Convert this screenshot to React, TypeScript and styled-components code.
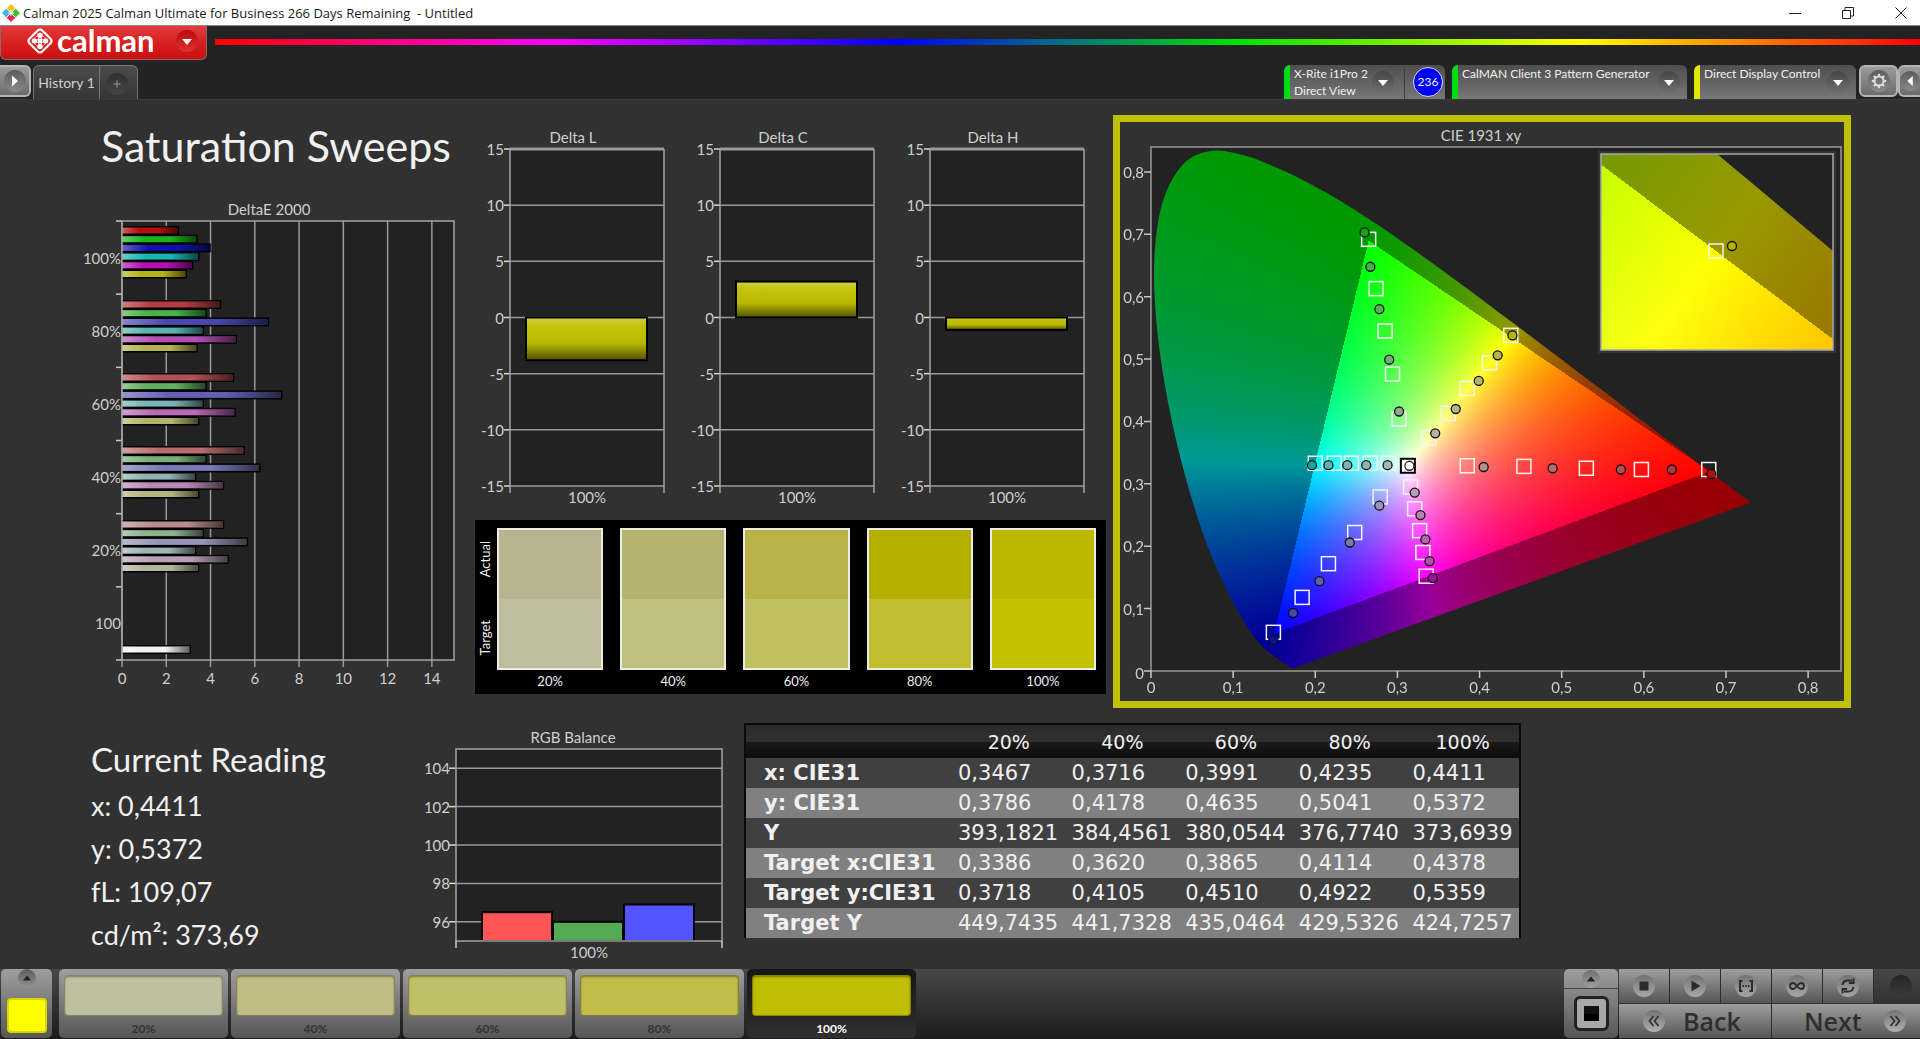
import React, { useLayoutEffect, useRef } from "react";
import styled, { createGlobalStyle, css } from "styled-components";

const humanist = `Lato, "Open Sans", "Liberation Sans", sans-serif`;
const system = `"Open Sans", "Noto Sans", "Liberation Sans", sans-serif`;
const wide = `"DejaVu Sans", "Noto Sans", sans-serif`;

const GlobalStyle = createGlobalStyle`
  *, *::before, *::after { box-sizing: border-box; }
  body { margin: 0; background: #313131; font-family: ${humanist}; color: #f0f0f0; }
  button { font: inherit; color: inherit; border: 0; padding: 0; margin: 0; background: none; cursor: pointer; }
  h1, h2, p { margin: 0; font-weight: 400; }
  svg { display: block; }
`;

/* ---------- window frame ---------- */

const Shell = styled.div`
  min-height: 100vh;
  display: flex;
  flex-direction: column;
  background: #313131;
`;

const TitleBar = styled.header`
  display: flex;
  align-items: center;
  height: 26px;
  padding-left: 2px;
  background: #fff;
  border-bottom: 1px solid #8a8a8a;
  color: #1a1a1a;
  font: 13px/24px ${system};
`;

const WindowTitle = styled.span`
  flex: 1;
  padding-left: 3px;
  white-space: pre;
`;

const WindowButtons = styled.div`
  display: flex;
  gap: 15px;
`;

const WindowButton = styled.button`
  width: 38px;
  height: 25px;
  display: grid;
  place-items: center;
`;

const Header = styled.div`
  background: #232323;
`;

const BrandRow = styled.div`
  display: flex;
  align-items: flex-start;
  gap: 8px;
  height: 39px;
`;

const Brand = styled.button`
  width: 207px;
  height: 34px;
  display: flex;
  align-items: center;
  gap: 3px;
  padding: 0 8px 3px 25px;
  border: 1px solid #8c6a6a;
  border-top: 0;
  border-radius: 0 0 6px 6px;
  background: linear-gradient(#e23c3c, #d82020 50%, #c81010);
  color: #fff;
`;

const BrandName = styled.span`
  flex: 1;
  padding-bottom: 3px;
  text-align: left;
  font: 700 31px/28px ${humanist};
`;

const Rainbow = styled.div`
  flex: 1;
  height: 6px;
  margin-top: 13px;
  background: linear-gradient(90deg, #ff0000, #ff00ff 20%, #0000ff 40%, #00e600 60%, #ffff00 80%, #ff0000);
`;

const TabRow = styled.div`
  display: flex;
  align-items: flex-start;
  height: 34px;
`;

const raised = css`
  background: linear-gradient(#9a9a9a, #6c6c6c);
  border: 2px solid #b4b4b4;
  border-radius: 6px;
`;

const EdgeButton = styled.button<{ $side: "left" | "right" }>`
  ${raised}
  width: ${(p) => (p.$side === "left" ? 31 : 22)}px;
  height: 32px;
  display: flex;
  align-items: center;
  justify-content: center;
  overflow: hidden;
  ${(p) =>
    p.$side === "left"
      ? "border-left: 0; border-top-left-radius: 0; border-bottom-left-radius: 0;"
      : "border-right: 0; border-top-right-radius: 0; border-bottom-right-radius: 0;"}
`;

const GearButton = styled.button`
  ${raised}
  width: 39px;
  height: 32px;
  display: grid;
  place-items: center;
`;

const Tabs = styled.div`
  display: flex;
  height: 34px;
  margin-left: 2px;
  border: 1px solid #777;
  border-bottom: 0;
  border-radius: 6px 6px 0 0;
  background: linear-gradient(#4c4c4c, #343434);
`;

const Tab = styled.button`
  width: 66px;
  border-right: 1px solid #777;
  color: #d0d0d0;
  font-size: 14px;
`;

const AddTab = styled.button`
  width: 37px;
  display: grid;
  place-items: center;
  padding: 3px 4px 0 0;
`;

const Spacer = styled.div`
  flex: 1;
`;

const Devices = styled.div`
  display: flex;
  gap: 7px;
  margin-right: 3px;
`;

const Device = styled.div<{ $status: string; $width: number; $inset: number }>`
  display: flex;
  align-items: center;
  width: ${(p) => p.$width}px;
  height: 34px;
  padding-right: ${(p) => p.$inset}px;
  border-left: 6px solid ${(p) => p.$status};
  border-radius: 6px 6px 0 0;
  background: linear-gradient(#4e4e4e, #777);
`;

const DeviceText = styled.div`
  flex: 1;
  align-self: stretch;
  padding-left: 4px;
  color: #f0f0f0;
  font-size: 12px;
  line-height: 17px;
  white-space: nowrap;
`;

const Divider = styled.span`
  width: 1px;
  align-self: stretch;
  margin: 3px 8px 0 10px;
  background: #3c3c3c;
`;

const Counter = styled.span`
  width: 30px;
  height: 30px;
  border: 1px solid #d8d8ff;
  border-radius: 50%;
  background: #0000f4;
  font-size: 12px;
  line-height: 28px;
  text-align: center;
`;

const CaretButton = styled.button`
  width: 22px;
  height: 22px;
`;

/* ---------- workspace ---------- */

const Workspace = styled.main`
  flex: 1;
  border-top: 1px solid #3a3a3a;
`;

const UpperRow = styled.section`
  display: grid;
  grid-template-columns: 475fr 631fr 814fr;
`;

const LowerRow = styled.section`
  display: grid;
  grid-template-columns: 424fr 298fr 1198fr;
  align-items: start;
`;

const SweepColumn = styled.div`
  min-width: 0;
  padding: 0 21px 0 82px;
`;

const PageTitle = styled.h1`
  padding: 16px 0 24px 19px;
  font-size: 43px;
  line-height: 60px;
  white-space: nowrap;
`;

const MiddleColumn = styled.div`
  min-width: 0;
  padding-top: 25px;
`;

const DeltaRow = styled.div`
  display: grid;
  grid-template-columns: repeat(3, minmax(0, 1fr));
  gap: 26px;
  padding: 0 20px 5px 7px;
`;

const Chart = styled.svg`
  width: 100%;
  height: auto;
  overflow: visible;
  font-family: ${humanist};
  font-size: 15px;
  fill: #cfcfcf;
`;

const Swatches = styled.div`
  display: flex;
  gap: 5px;
  height: 174px;
  padding: 8px 10px 0 3px;
  background: #000;
`;

const SideLabels = styled.div`
  width: 14px;
  display: grid;
  grid-template-rows: 62px 96px;
  justify-items: center;
  align-items: center;
  font-size: 13px;
  line-height: 14px;
`;

const SideLabel = styled.span`
  writing-mode: vertical-rl;
  rotate: 180deg;
`;

const SwatchGrid = styled.div`
  flex: 1;
  display: grid;
  grid-template-columns: repeat(5, minmax(0, 1fr));
  gap: 17px;
`;

const Swatch = styled.div`
  font-size: 13px;
  line-height: 22px;
  text-align: center;
`;

const SwatchBox = styled.div<{ $actual: string; $target: string }>`
  height: 142px;
  border: 2px solid #ecece0;
  background: linear-gradient(${(p) => p.$actual} 50%, ${(p) => p.$target} 50%);
`;

const CieColumn = styled.div`
  min-width: 0;
  padding: 15px 69px 0 7px;
`;

const CiePanel = styled.div`
  border: 7px solid #bfbf08;
`;

const FieldCanvas = styled.canvas`
  display: block;
  width: 100%;
  height: 100%;
`;

const Readings = styled.div`
  padding: 26px 0 0 91px;
  font-size: 27px;
  line-height: 43px;
  white-space: nowrap;
`;

const ReadingTitle = styled.h2`
  font-size: 33px;
  line-height: 50px;
`;

const RgbCell = styled.div`
  min-width: 0;
  padding-top: 17px;
`;

const TableCell = styled.div`
  padding: 15px 399px 0 22px;
`;

const Table = styled.table`
  width: 100%;
  table-layout: fixed;
  border-collapse: collapse;
  border: 2px solid #0a0a0a;
  border-bottom: 0;
  font: 21px/30px ${wide};
  white-space: nowrap;
`;

const HeadRow = styled.tr`
  height: 34px;
  background: linear-gradient(#2a2a2a, #303030 52%, #1a1a1a 52%, #0c0c0c);
`;

const HeadCell = styled.th`
  padding: 0;
  font-size: 19px;
  font-weight: 400;
  text-align: center;
  &:first-child { width: 207px; }
`;

const BodyRow = styled.tr`
  height: 30px;
  background: #404040;
  &:nth-child(even) { background: #808080; }
`;

const RowHead = styled.th`
  padding: 0 0 0 18px;
  text-align: left;
`;

const Cell = styled.td`
  padding: 0 0 0 6px;
`;

/* ---------- bottom bar ---------- */

const BottomBar = styled.footer`
  display: flex;
  height: 70px;
  padding-bottom: 1px;
  background: linear-gradient(#484848, #1c1c1c);
`;

const metal = css`
  background: linear-gradient(#9e9e9e, #565656);
`;

const PatternButton = styled.button`
  ${metal}
  width: 51px;
  margin: 0 7px 0 1px;
  display: flex;
  flex-direction: column;
  align-items: center;
  border-radius: 5px;
`;

const PatternColor = styled.span`
  width: 40px;
  height: 35px;
  margin-top: 11px;
  border: 2px solid #d8d800;
  border-radius: 4px;
  background: #ffff00;
`;

const Tiles = styled.div`
  display: flex;
  gap: 3px;
`;

const Tile = styled.button<{ $selected: boolean }>`
  width: 169px;
  padding: 6px 5px 0;
  border-radius: 5px;
  font-size: 12px;
  font-weight: 700;
  line-height: 26px;
  ${(p) =>
    p.$selected
      ? "background: linear-gradient(#161616, #303030); color: #fff;"
      : "background: linear-gradient(#9e9e9e, #565656); color: #333;"}
`;

const TileColor = styled.span<{ $color: string }>`
  display: block;
  height: 41px;
  border: 1px solid rgba(0, 0, 0, 0.3);
  border-radius: 4px;
  background: ${(p) => p.$color};
  box-shadow: inset 0 1px 2px rgba(0, 0, 0, 0.35);
`;

const Target = styled.div`
  ${metal}
  width: 54px;
  display: grid;
  grid-template-rows: 20px 1fr;
  border-radius: 5px;
`;

const TargetToggle = styled.button`
  display: grid;
  place-items: center;
  border-bottom: 1px solid #444;
`;

const TargetButton = styled.button`
  width: 35px;
  height: 35px;
  place-self: center;
  display: grid;
  place-items: center;
  border: 3px solid #222;
  border-radius: 6px;
  background: #a8a8a8;
`;

const TargetMark = styled.span`
  width: 15px;
  height: 15px;
  background: linear-gradient(#111 50%, #000 50%);
`;

const Transport = styled.div`
  width: 301px;
  display: grid;
  grid-template-rows: 34px 34px;
  row-gap: 1px;
  margin-left: 1px;
`;

const TransportRow = styled.div`
  display: flex;
`;

const ToolButton = styled.button`
  ${metal}
  width: 51px;
  display: grid;
  place-items: center;
  border-right: 1px solid #2c2c2c;
`;

const IdleLamp = styled.span`
  flex: 1;
  display: grid;
  place-items: center;
  padding-left: 8px;
`;

const NavButton = styled.button<{ $kind: "back" | "next" }>`
  ${metal}
  display: flex;
  align-items: center;
  color: #2e2e2e;
  font: 600 25px/30px ${system};
  ${(p) =>
    p.$kind === "back"
      ? "width: 153px; padding: 0 0 1px 24px; gap: 18px; border-right: 1px solid #2c2c2c;"
      : "flex: 1; padding: 0 0 1px 32px; gap: 22px;"}
`;

/* ---------- icons ---------- */

function AppIcon() {
  return (
    <svg width="18" height="18" viewBox="0 0 18 18" aria-hidden="true">
      <path d="M9 0l4.500 4.500L9 9 4.500 4.500z" fill="#f6c21c" />
      <path d="M4.500 4.500L9 9l-4.500 4.500L0 9z" fill="#3fb4e6" />
      <path d="M13.500 4.500L18 9l-4.500 4.500L9 9z" fill="#35c235" />
      <path d="M9 9l4.500 4.500L9 18l-4.500-4.500z" fill="#e6284e" />
      <path d="M4.500 4.500l9 9M13.500 4.500l-9 9" stroke="#fff" strokeWidth="1" />
      <path d="M9 5.500L12.500 9 9 12.500 5.500 9z" fill="#fff" fillOpacity=".55" />
    </svg>
  );
}

function BrandIcon() {
  const dots = [
    [13.5, 8.2], [8.2, 13.5], [18.8, 13.5], [13.5, 18.8],
  ];
  return (
    <svg width="28" height="28" viewBox="0 0 27 27" aria-hidden="true">
      <rect x="4.800" y="4.800" width="17.400" height="17.400" rx="3" transform="rotate(45 13.5 13.5)" fill="none" stroke="#fff" strokeWidth="2.200" />
      <path d="M9.500 9.500l8 8M17.500 9.500l-8 8" stroke="#fff" strokeWidth="2" />
      {dots.map(([x, y], i) => (
        <circle key={i} cx={x} cy={y} r="2.700" fill="#fff" />
      ))}
      <circle cx="10.600" cy="10.600" r="1.200" fill="#d82020" />
      <circle cx="16.400" cy="10.600" r="1.200" fill="#d82020" />
      <circle cx="10.600" cy="16.400" r="1.200" fill="#d82020" />
      <circle cx="16.400" cy="16.400" r="1.200" fill="#d82020" />
      <circle cx="13.500" cy="13.500" r="2.200" fill="#fff" />
    </svg>
  );
}

type Glyph = "down" | "up" | "left" | "right" | "plus" | "gear" | "stop" | "play" | "range" | "loop" | "cycle" | "back" | "next" | "none";

const gearTeeth = [0, 45, 90, 135, 180, 225, 270, 315];

const glyphs: Record<Glyph, React.ReactNode> = {
  down: <path d="M6 9h10l-5 6z" fill="currentColor" />,
  up: <path d="M6 14h10l-5-6z" fill="currentColor" />,
  right: <path d="M8 5.500v11l6-5.500z" fill="currentColor" />,
  left: <path d="M14 5.500v11L8 11z" fill="currentColor" />,
  plus: <path d="M11 7.500v7M7.500 11h7" stroke="currentColor" />,
  gear: (
    <g fill="none" stroke="currentColor">
      <circle cx="11" cy="11" r="4.500" strokeWidth="2" />
      {gearTeeth.map((a) => (
        <path key={a} d="M11 6V3.800" strokeWidth="2.200" transform={`rotate(${a} 11 11)`} />
      ))}
    </g>
  ),
  stop: <path d="M6.500 6.500h9v9h-9z" fill="currentColor" />,
  play: <path d="M7.500 5.500v11l9-5.500z" fill="currentColor" />,
  range: (
    <g fill="none" stroke="currentColor" strokeWidth="2">
      <path d="M7.500 6H5v10h2.500M14.500 6H17v10h-2.500" />
      <path d="M7.500 11h1.500M10.200 11h1.600M13 11h1.500" />
    </g>
  ),
  loop: (
    <path
      d="M11 11c-1.500-2-2.600-3-4-3a3 3 0 0 0 0 6c1.400 0 2.500-1 4-3s2.600-3 4-3a3 3 0 0 1 0 6c-1.400 0-2.500-1-4-3z"
      fill="none"
      stroke="currentColor"
      strokeWidth="1.800"
    />
  ),
  cycle: (
    <g fill="none" stroke="currentColor" strokeWidth="2">
      <path d="M5.500 10c.3-3 2.500-4.500 5.500-4.500h4M16.500 12c-.3 3-2.500 4.500-5.500 4.500H7" />
      <path d="M16.500 3.500v4.500H12M5.500 18.500V14H10" />
    </g>
  ),
  back: <path d="M10.500 6L6.500 11l4 5M15.500 6l-4 5 4 5" fill="none" stroke="currentColor" strokeWidth="1.600" />,
  next: <path d="M6.500 6l4 5-4 5M11.500 6l4 5-4 5" fill="none" stroke="currentColor" strokeWidth="1.600" />,
  none: null,
};

function Knob({ glyph, id, from, to, color, size = 22 }: { glyph: Glyph; id: string; from: string; to: string; color: string; size?: number }) {
  return (
    <svg width={size} height={size} viewBox="0 0 22 22" color={color} aria-hidden="true">
      <defs>
        <linearGradient id={id} x1="0" y1="0" x2="0" y2="1">
          <stop offset="0" stopColor={from} />
          <stop offset="1" stopColor={to} />
        </linearGradient>
      </defs>
      <circle cx="11" cy="11" r="11" fill={`url(#${id})`} />
      {glyphs[glyph]}
    </svg>
  );
}

/* ---------- DeltaE 2000 ---------- */

const sweepGroups = [
  { label: "100%", top: 31, colors: ["#b41010", "#18b418", "#1010b0", "#18b4b4", "#b410b4", "#b4b418"], values: [2.58, 3.42, 4.01, 3.5, 3.23, 2.93] },
  { label: "80%", top: 105, colors: ["#b43c3c", "#48b448", "#4848b0", "#58b4b4", "#b450b4", "#b4b450"], values: [4.48, 3.83, 6.65, 3.7, 5.19, 3.42] },
  { label: "60%", top: 178, colors: ["#b45050", "#60b060", "#6060b4", "#78b4b4", "#b868b8", "#b4b468"], values: [5.07, 3.83, 7.25, 3.7, 5.14, 3.5] },
  { label: "40%", top: 251, colors: ["#b86c6c", "#78b078", "#7878b4", "#90b4b4", "#b888b8", "#b4b480"], values: [5.55, 3.83, 6.26, 3.36, 4.62, 3.5] },
  { label: "20%", top: 325, colors: ["#b88c8c", "#90b090", "#9494b4", "#a0b4b4", "#b8a0b4", "#b4b49c"], values: [4.62, 3.7, 5.69, 3.36, 4.83, 3.5] },
  { label: "100", top: 450, colors: ["#f2f2f2"], values: [3.11] },
];

function SweepChart() {
  const left = 40;
  const right = 372;
  const top = 21;
  const bottom = 460;
  const unit = (right - left) / 15;
  const band = (bottom - top) / 6;
  return (
    <Chart viewBox="0 0 372 490" role="img" aria-label="DeltaE 2000">
      <defs>
        <linearGradient id="gloss" x1="0" y1="0" x2="1" y2="0">
          <stop offset="0" stopColor="#fff" stopOpacity=".35" />
          <stop offset=".3" stopColor="#fff" stopOpacity="0" />
          <stop offset=".65" stopColor="#000" stopOpacity="0" />
          <stop offset="1" stopColor="#000" stopOpacity=".6" />
        </linearGradient>
      </defs>
      <text x="187" y="15" textAnchor="middle">DeltaE 2000</text>
      <rect x={left} y={top} width={right - left} height={bottom - top} fill="#222" />
      {[0, 2, 4, 6, 8, 10, 12, 14].map((v) => (
        <g key={v}>
          <line x1={left + v * unit} x2={left + v * unit} y1={top} y2={bottom + 7} stroke="#999" strokeWidth="1.500" />
          <text x={left + v * unit} y={bottom + 24} textAnchor="middle">{v}</text>
        </g>
      ))}
      {[0, 1, 2, 3, 4, 5, 6].map((i) => (
        <line key={i} x1={left - 6} x2={left} y1={top + i * band} y2={top + i * band} stroke="#c8c8c8" strokeWidth="1.500" />
      ))}
      {sweepGroups.map((g, i) => (
        <g key={g.label}>
          <text x={left - 1} y={top + (i + 0.5) * band + 6} textAnchor="end">{g.label}</text>
          {g.values.map((v, j) => (
            <g key={j}>
              <rect x={left} y={g.top - 5 + j * 8.7} width={v * unit} height="9" fill="#000" />
              <rect x={left} y={g.top - 3.5 + j * 8.7} width={v * unit - 1.5} height="6" fill={g.colors[j]} />
              <rect x={left} y={g.top - 3.5 + j * 8.7} width={v * unit - 1.5} height="6" fill="url(#gloss)" />
            </g>
          ))}
        </g>
      ))}
      <rect x={left} y={top} width={right - left} height={bottom - top} fill="none" stroke="#a4a4a4" strokeWidth="1.500" />
    </Chart>
  );
}

/* ---------- Delta L / C / H ---------- */

function DeltaChart({ title, value }: { title: string; value: number }) {
  const left = 28;
  const right = 182;
  const top = 24;
  const bottom = 361;
  const y = (v: number) => top + ((15 - v) / 30) * (bottom - top);
  const barTop = y(Math.max(value, 0));
  const barHeight = Math.abs(y(value) - y(0));
  return (
    <Chart viewBox="0 0 184 390" role="img" aria-label={title}>
      <defs>
        <linearGradient id="deltaBar" x1="0" y1="0" x2="0" y2="1">
          <stop offset="0" stopColor="#d0d050" />
          <stop offset=".2" stopColor="#c4c408" />
          <stop offset=".6" stopColor="#b8b804" />
          <stop offset="1" stopColor="#505004" />
        </linearGradient>
      </defs>
      <text x="91" y="18" textAnchor="middle">{title}</text>
      <rect x={left} y={top} width={right - left} height={bottom - top} fill="#222" />
      {[15, 10, 5, 0, -5, -10, -15].map((v) => (
        <g key={v}>
          <line x1={left - 6} x2={left} y1={y(v)} y2={y(v)} stroke="#d8d8d8" strokeWidth="1.500" />
          <line x1={left} x2={right} y1={y(v)} y2={y(v)} stroke="#999" strokeWidth={v === 15 ? 3 : 1.5} />
          <text x={left - 6} y={y(v) + 6} textAnchor="end">{v}</text>
        </g>
      ))}
      <path d={`M${left} ${bottom + 7}V${top}M${right} ${top}V${bottom + 7}`} stroke="#a4a4a4" strokeWidth="1.500" />
      <rect x={left + 16} y={barTop} width="121" height={barHeight} fill="url(#deltaBar)" stroke="#000" strokeWidth="2" />
      <text x="105" y="378" textAnchor="middle">100%</text>
    </Chart>
  );
}

/* ---------- RGB balance ---------- */

function RgbChart() {
  const left = 32;
  const right = 298;
  const top = 24;
  const bottom = 216;
  const y = (v: number) => top + ((105 - v) / 10) * (bottom - top);
  const bars = [
    { value: 96.5, color: "#ff5555" },
    { value: 96, color: "#55aa55" },
    { value: 96.9, color: "#5555ff" },
  ];
  return (
    <Chart viewBox="0 0 298 240" role="img" aria-label="RGB Balance">
      <text x="149" y="18" textAnchor="middle">RGB Balance</text>
      <rect x={left} y={top} width={right - left} height={bottom - top} fill="#222" />
      {[104, 102, 100, 98, 96].map((v) => (
        <g key={v}>
          <line x1={left - 7} x2={left} y1={y(v)} y2={y(v)} stroke="#d8d8d8" strokeWidth="1.500" />
          <line x1={left} x2={right} y1={y(v)} y2={y(v)} stroke="#999" strokeWidth="1.500" />
          <text x={left - 6} y={y(v) + 6} textAnchor="end">{v}</text>
        </g>
      ))}
      {bars.map((b, i) => (
        <rect key={b.color} x={58 + i * 71} y={y(b.value)} width="70" height={bottom - y(b.value)} fill={b.color} stroke="#000" strokeWidth="2" />
      ))}
      <rect x={left} y={top} width={right - left} height={bottom - top} fill="none" stroke="#a4a4a4" strokeWidth="1.500" />
      <path d={`M${left} ${bottom}v7M${right} ${bottom}v7`} stroke="#c8c8c8" strokeWidth="1.500" />
      <text x="165" y="233" textAnchor="middle">100%</text>
    </Chart>
  );
}

/* ---------- CIE 1931 ---------- */

type Point = [number, number];

const locus: Point[] = [
  [0.1741, 0.005], [0.1714, 0.0051], [0.1689, 0.0069], [0.1644, 0.0109], [0.1566, 0.0177], [0.144, 0.0297],
  [0.1355, 0.0399], [0.1241, 0.0578], [0.1096, 0.0868], [0.0913, 0.1327], [0.0687, 0.2007], [0.0454, 0.295],
  [0.0235, 0.4127], [0.0082, 0.5384], [0.0039, 0.6548], [0.0139, 0.7502], [0.0389, 0.812], [0.0743, 0.8338],
  [0.1142, 0.8262], [0.1547, 0.8059], [0.1929, 0.7816], [0.2296, 0.7543], [0.2658, 0.7243], [0.3016, 0.6923],
  [0.3373, 0.6589], [0.3731, 0.6245], [0.4087, 0.5896], [0.4441, 0.5547], [0.4788, 0.5202], [0.5125, 0.4866],
  [0.5448, 0.4544], [0.5752, 0.4242], [0.6029, 0.3965], [0.627, 0.3725], [0.6482, 0.3514], [0.6658, 0.334],
  [0.6915, 0.3083], [0.719, 0.2809], [0.73, 0.27],
];

const red: Point = [0.68, 0.32];
const green: Point = [0.265, 0.69];
const blue: Point = [0.15, 0.06];
const white: Point = [0.3127, 0.329];

function weights([x, y]: Point) {
  const d = (green[1] - blue[1]) * (red[0] - blue[0]) + (blue[0] - green[0]) * (red[1] - blue[1]);
  const r = ((green[1] - blue[1]) * (x - blue[0]) + (blue[0] - green[0]) * (y - blue[1])) / d;
  const g = ((blue[1] - red[1]) * (x - blue[0]) + (red[0] - blue[0]) * (y - blue[1])) / d;
  return [r, g, 1 - r - g];
}

const whiteWeights = weights(white);

function GamutField({ x0, x1, y0, y1, width, height }: { x0: number; x1: number; y0: number; y1: number; width: number; height: number }) {
  const ref = useRef<HTMLCanvasElement>(null);
  useLayoutEffect(() => {
    const ctx = ref.current?.getContext("2d");
    if (!ctx) return;
    const image = ctx.createImageData(width, height);
    for (let py = 0; py < height; py++) {
      for (let px = 0; px < width; px++) {
        const w = weights([x0 + ((px + 0.5) / width) * (x1 - x0), y1 - ((py + 0.5) / height) * (y1 - y0)]);
        const inside = Math.min(...w) >= 0;
        const rgb = w.map((v, i) => Math.max(0, v / whiteWeights[i]));
        const peak = Math.max(...rgb);
        const at = (py * width + px) * 4;
        for (let i = 0; i < 3; i++) image.data[at + i] = (rgb[i] / peak) * (inside ? 255 : 153);
        image.data[at + 3] = 255;
      }
    }
    ctx.putImageData(image, 0, 0);
    const pts = locus.map(([x, y]) => [((x - x0) / (x1 - x0)) * width, ((y1 - y) / (y1 - y0)) * height]);
    ctx.globalCompositeOperation = "destination-in";
    ctx.beginPath();
    ctx.moveTo(pts[0][0], pts[0][1]);
    for (let i = 0; i < pts.length - 1; i++) {
      const a = pts[Math.max(i - 1, 0)];
      const b = pts[i];
      const c = pts[i + 1];
      const d = pts[Math.min(i + 2, pts.length - 1)];
      ctx.bezierCurveTo(b[0] + (c[0] - a[0]) / 6, b[1] + (c[1] - a[1]) / 6, c[0] - (d[0] - b[0]) / 6, c[1] - (d[1] - b[1]) / 6, c[0], c[1]);
    }
    ctx.closePath();
    ctx.fill();
    ctx.globalCompositeOperation = "source-over";
  }, [x0, x1, y0, y1, width, height]);
  return <FieldCanvas ref={ref} width={width} height={height} />;
}

const series: { colors: string[]; targets: Point[]; actual: Point[] }[] = [
  {
    colors: ["#18a018", "#40b440", "#58b058", "#74ac74", "#8cac8c"],
    targets: [[0.265, 0.692], [0.274, 0.613], [0.285, 0.545], [0.294, 0.476], [0.302, 0.404]],
    actual: [[0.26, 0.703], [0.267, 0.648], [0.278, 0.58], [0.29, 0.499], [0.302, 0.416]],
  },
  {
    colors: ["#b4b410", "#b4b448", "#b4b464", "#b4b484", "#b4b4a0"],
    targets: [[0.438, 0.538], [0.412, 0.494], [0.385, 0.453], [0.362, 0.413], [0.338, 0.374]],
    actual: [[0.44, 0.538], [0.422, 0.506], [0.399, 0.465], [0.371, 0.42], [0.346, 0.381]],
  },
  {
    colors: ["#10a8a0", "#58b4ac", "#78b4b0", "#90b4b0", "#a4b8b8"],
    targets: [[0.2, 0.333], [0.223, 0.333], [0.244, 0.333], [0.267, 0.333], [0.289, 0.333]],
    actual: [[0.196, 0.33], [0.216, 0.33], [0.239, 0.33], [0.262, 0.33], [0.288, 0.33]],
  },
  {
    colors: ["#b01010", "#b03840", "#b05058", "#b86c70", "#b88c90"],
    targets: [[0.679, 0.323], [0.597, 0.323], [0.53, 0.325], [0.454, 0.328], [0.385, 0.329]],
    actual: [[0.682, 0.316], [0.634, 0.323], [0.572, 0.323], [0.489, 0.325], [0.405, 0.327]],
  },
  {
    colors: ["#a010a0", "#b050b0", "#b068b0", "#b484b0", "#b8a0b8"],
    targets: [[0.335, 0.152], [0.331, 0.19], [0.327, 0.225], [0.321, 0.26], [0.316, 0.295]],
    actual: [[0.343, 0.149], [0.339, 0.176], [0.334, 0.211], [0.328, 0.25], [0.321, 0.286]],
  },
  {
    colors: ["#1010a0", "#4848b0", "#6060b4", "#7878b4", "#9898b4"],
    targets: [[0.149, 0.062], [0.184, 0.118], [0.216, 0.172], [0.248, 0.222], [0.279, 0.279]],
    actual: [[0.149, 0.05], [0.173, 0.093], [0.205, 0.144], [0.242, 0.206], [0.278, 0.265]],
  },
];

function CieChart() {
  const left = 31;
  const top = 25;
  const width = 690;
  const height = 524;
  const bottom = top + height;
  const range = 0.84;
  const x = (v: number) => left + (v / range) * width;
  const y = (v: number) => bottom - (v / range) * height;
  const label = (v: number) => (v === 0 ? "0" : `0,${v}`);
  const focus: Point = [0.4378, 0.5359];
  const inset = { x: 481, y: 32, width: 232, height: 196 };
  return (
    <Chart viewBox="0 0 724 579" role="img" aria-label="CIE 1931 xy">
      <text x="361" y="19" textAnchor="middle">CIE 1931 xy</text>
      <rect x={left} y={top} width={width} height={height} fill="#222" />
      <foreignObject x={left} y={top} width={width} height={height}>
        <GamutField x0={0} x1={range} y0={0} y1={range} width={width} height={height} />
      </foreignObject>
      <rect x={left} y={top} width={width} height={height} fill="none" stroke="#999" strokeWidth="1.500" />
      {[0, 1, 2, 3, 4, 5, 6, 7, 8].map((v) => (
        <g key={v}>
          <path d={`M${x(v / 10)} ${bottom}v7M${left} ${y(v / 10)}h-7`} stroke="#c8c8c8" strokeWidth="1.500" />
          <text x={x(v / 10)} y={bottom + 22} textAnchor="middle">{label(v)}</text>
          <text x={left - 7} y={y(v / 10) + (v === 0 ? 8 : 6)} textAnchor="end">{label(v)}</text>
        </g>
      ))}
      {series.map((s, k) => (
        <g key={k} fill="none" stroke="#f4f4f4" strokeWidth="1.500">
          {s.targets.map(([a, b], i) => (
            <rect key={i} x={x(a) - 7} y={y(b) - 7} width="14" height="14" />
          ))}
        </g>
      ))}
      <rect x={x(white[0]) - 7} y={y(white[1]) - 7} width="14" height="14" fill="#fff" stroke="#000" strokeWidth="2" />
      {series.map((s, k) => (
        <g key={k} stroke="#111" strokeWidth="1.300">
          {s.actual.map(([a, b], i) => (
            <circle key={i} cx={x(a)} cy={y(b)} r="4.500" fill={s.colors[i]} />
          ))}
        </g>
      ))}
      <circle cx={x(0.3146)} cy={y(0.329)} r="4.500" fill="#fff" stroke="#222" strokeWidth="1.300" />
      <rect x={inset.x - 3} y={inset.y - 3} width={inset.width + 6} height={inset.height + 6} fill="#333" />
      <rect {...inset} fill="#222" />
      <foreignObject {...inset}>
        <GamutField x0={focus[0] - 0.025} x1={focus[0] + 0.025} y0={focus[1] - 0.025} y1={focus[1] + 0.025} width={inset.width} height={inset.height} />
      </foreignObject>
      <rect {...inset} fill="none" stroke="#a8a8a8" strokeWidth="1.500" />
      <rect x={inset.x + inset.width / 2 - 8} y={inset.y + inset.height / 2 - 8} width="14" height="14" fill="none" stroke="#f4f4f4" strokeWidth="1.500" />
      <circle cx={inset.x + inset.width / 2 + 15} cy={inset.y + inset.height / 2 - 6} r="4.500" fill="#b4b400" stroke="#111" strokeWidth="1.300" />
    </Chart>
  );
}

/* ---------- data ---------- */

const levels = ["20%", "40%", "60%", "80%", "100%"];
const actualColors = ["#b8b490", "#b6b270", "#b8b248", "#b4b000", "#bcb800"];
const targetColors = ["#bebe9e", "#c0c080", "#c0c060", "#c0be30", "#c4c200"];
const tileColors = ["#bec09e", "#c0be84", "#c0c068", "#c0be48", "#c0be00"];

const rows: [string, string[]][] = [
  ["x: CIE31", ["0,3467", "0,3716", "0,3991", "0,4235", "0,4411"]],
  ["y: CIE31", ["0,3786", "0,4178", "0,4635", "0,5041", "0,5372"]],
  ["Y", ["393,1821", "384,4561", "380,0544", "376,7740", "373,6939"]],
  ["Target x:CIE31", ["0,3386", "0,3620", "0,3865", "0,4114", "0,4378"]],
  ["Target y:CIE31", ["0,3718", "0,4105", "0,4510", "0,4922", "0,5359"]],
  ["Target Y", ["449,7435", "441,7328", "435,0464", "429,5326", "424,7257"]],
];

function Caret({ id, label }: { id: string; label: string }) {
  return (
    <CaretButton aria-label={label}>
      <Knob glyph="down" id={id} from="#464646" to="#6e6e6e" color="#fff" />
    </CaretButton>
  );
}

export default function App() {
  return (
    <Shell>
      <GlobalStyle />
      <TitleBar>
        <AppIcon />
        <WindowTitle>{"Calman 2025 Calman Ultimate for Business 266 Days Remaining  - Untitled"}</WindowTitle>
        <WindowButtons>
          <WindowButton aria-label="Minimize">
            <svg width="12" height="12" viewBox="0 0 12 12"><path d="M0 6.500h12" stroke="#222" /></svg>
          </WindowButton>
          <WindowButton aria-label="Restore">
            <svg width="12" height="12" viewBox="0 0 12 12" fill="none" stroke="#222">
              <path d="M.5 3.500h8v8h-8zM3 3.500v-3h8.500V9H8.500" />
            </svg>
          </WindowButton>
          <WindowButton aria-label="Close">
            <svg width="12" height="12" viewBox="0 0 12 12"><path d="M.5.5l11 11M11.500.5l-11 11" stroke="#222" /></svg>
          </WindowButton>
        </WindowButtons>
      </TitleBar>

      <Header>
        <BrandRow>
          <Brand>
            <BrandIcon />
            <BrandName>calman</BrandName>
            <Knob glyph="down" id="brandKnob" from="#b80c0c" to="#e03030" color="#fff" />
          </Brand>
          <Rainbow />
        </BrandRow>
        <TabRow>
          <EdgeButton $side="left" aria-label="Open side panel">
            <Knob glyph="right" id="sideKnob" from="#5a5a5a" to="#8a8a8a" color="#fff" />
          </EdgeButton>
          <Tabs>
            <Tab>History 1</Tab>
            <AddTab aria-label="Add tab">
              <Knob glyph="plus" id="addKnob" from="#303030" to="#444" color="#999" />
            </AddTab>
          </Tabs>
          <Spacer />
          <Devices>
            <Device $status="#00dc14" $width={161} $inset={2}>
              <DeviceText>X-Rite i1Pro 2<br />Direct View</DeviceText>
              <Caret id="meterKnob" label="Meter options" />
              <Divider />
              <Counter>236</Counter>
            </Device>
            <Device $status="#00dc14" $width={235} $inset={7}>
              <DeviceText>CalMAN Client 3 Pattern Generator</DeviceText>
              <Caret id="sourceKnob" label="Source options" />
            </Device>
            <Device $status="#e6e600" $width={162} $inset={7}>
              <DeviceText>Direct Display Control</DeviceText>
              <Caret id="displayKnob" label="Display options" />
            </Device>
          </Devices>
          <GearButton aria-label="Settings">
            <Knob glyph="gear" id="gearKnob" from="#5e5e5e" to="#8a8a8a" color="#ddd" />
          </GearButton>
          <EdgeButton $side="right" aria-label="Open right panel">
            <Knob glyph="left" id="rightKnob" from="#5a5a5a" to="#8a8a8a" color="#fff" />
          </EdgeButton>
        </TabRow>
      </Header>

      <Workspace>
        <UpperRow>
          <SweepColumn>
            <PageTitle>Saturation Sweeps</PageTitle>
            <SweepChart />
          </SweepColumn>
          <MiddleColumn>
            <DeltaRow>
              <DeltaChart title="Delta L" value={-3.8} />
              <DeltaChart title="Delta C" value={3.2} />
              <DeltaChart title="Delta H" value={-1.1} />
            </DeltaRow>
            <Swatches>
              <SideLabels>
                <SideLabel>Actual</SideLabel>
                <SideLabel>Target</SideLabel>
              </SideLabels>
              <SwatchGrid>
                {levels.map((l, i) => (
                  <Swatch key={l}>
                    <SwatchBox $actual={actualColors[i]} $target={targetColors[i]} />
                    {l}
                  </Swatch>
                ))}
              </SwatchGrid>
            </Swatches>
          </MiddleColumn>
          <CieColumn>
            <CiePanel>
              <CieChart />
            </CiePanel>
          </CieColumn>
        </UpperRow>

        <LowerRow>
          <Readings>
            <ReadingTitle>Current Reading</ReadingTitle>
            <p>x: 0,4411</p>
            <p>y: 0,5372</p>
            <p>fL: 109,07</p>
            <p>cd/m²: 373,69</p>
          </Readings>
          <RgbCell>
            <RgbChart />
          </RgbCell>
          <TableCell>
            <Table>
              <thead>
                <HeadRow>
                  <HeadCell />
                  {levels.map((l) => (
                    <HeadCell key={l} scope="col">{l}</HeadCell>
                  ))}
                </HeadRow>
              </thead>
              <tbody>
                {rows.map(([name, values]) => (
                  <BodyRow key={name}>
                    <RowHead scope="row">{name}</RowHead>
                    {values.map((v) => (
                      <Cell key={v}>{v}</Cell>
                    ))}
                  </BodyRow>
                ))}
              </tbody>
            </Table>
          </TableCell>
        </LowerRow>
      </Workspace>

      <BottomBar>
        <PatternButton aria-label="Pattern window">
          <Knob glyph="up" id="patternKnob" from="#5c5c5c" to="#909090" color="#222" size={18} />
          <PatternColor />
        </PatternButton>
        <Tiles>
          {levels.map((l, i) => (
            <Tile key={l} $selected={i === 4}>
              <TileColor $color={tileColors[i]} />
              {l}
            </Tile>
          ))}
        </Tiles>
        <Spacer />
        <Target>
          <TargetToggle aria-label="Expand">
            <Knob glyph="up" id="expandKnob" from="#707070" to="#a0a0a0" color="#222" size={18} />
          </TargetToggle>
          <TargetButton aria-label="Pattern insert">
            <TargetMark />
          </TargetButton>
        </Target>
        <Transport>
          <TransportRow>
            {(["stop", "play", "range", "loop", "cycle"] as Glyph[]).map((g) => (
              <ToolButton key={g} aria-label={g}>
                <Knob glyph={g} id={`tool-${g}`} from="#727272" to="#a8a8a8" color="#2c2c2c" />
              </ToolButton>
            ))}
            <IdleLamp>
              <Knob glyph="none" id="idleKnob" from="#262626" to="#3a3a3a" color="#222" />
            </IdleLamp>
          </TransportRow>
          <TransportRow>
            <NavButton $kind="back">
              <Knob glyph="back" id="backKnob" from="#727272" to="#b0b0b0" color="#2c2c2c" />
              Back
            </NavButton>
            <NavButton $kind="next">
              Next
              <Knob glyph="next" id="nextKnob" from="#727272" to="#b0b0b0" color="#2c2c2c" />
            </NavButton>
          </TransportRow>
        </Transport>
      </BottomBar>
    </Shell>
  );
}
